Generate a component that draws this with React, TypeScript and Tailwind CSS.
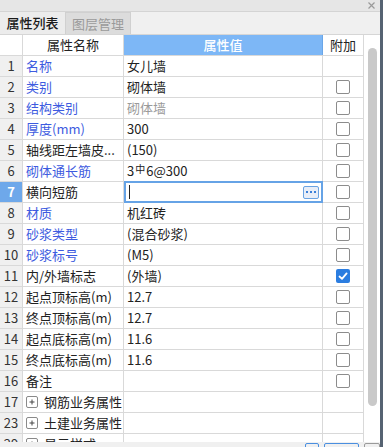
const font = { fontFamily: '"Noto Sans CJK SC", "Microsoft YaHei", sans-serif' };

type Row = {
  no: string;
  name: string;
  value?: React.ReactNode;
  blue?: boolean;
  grey?: boolean;
  check?: boolean | null;
  group?: boolean;
  editing?: boolean;
};

const rows: Row[] = [
  { no: '1', name: '名称', value: '女儿墙', blue: true, check: null },
  { no: '2', name: '类别', value: '砌体墙', blue: true, check: false },
  { no: '3', name: '结构类别', value: '砌体墙', blue: true, grey: true, check: false },
  { no: '4', name: '厚度(mm)', value: '300', blue: true, check: false },
  { no: '5', name: '轴线距左墙皮...', value: '(150)', check: false },
  {
    no: '6',
    name: '砌体通长筋',
    value: (
      <>
        3<span className="relative -top-[3px] mx-[1px] text-[10px]">中</span>6@300
      </>
    ),
    blue: true,
    check: false,
  },
  { no: '7', name: '横向短筋', editing: true, check: false },
  { no: '8', name: '材质', value: '机红砖', blue: true, check: false },
  { no: '9', name: '砂浆类型', value: '(混合砂浆)', blue: true, check: false },
  { no: '10', name: '砂浆标号', value: '(M5)', blue: true, check: false },
  { no: '11', name: '内/外墙标志', value: '(外墙)', check: true },
  { no: '12', name: '起点顶标高(m)', value: '12.7', check: false },
  { no: '13', name: '终点顶标高(m)', value: '12.7', check: false },
  { no: '14', name: '起点底标高(m)', value: '11.6', check: false },
  { no: '15', name: '终点底标高(m)', value: '11.6', check: false },
  { no: '16', name: '备注', value: '', check: false },
  { no: '17', name: '钢筋业务属性', group: true, check: null },
  { no: '23', name: '土建业务属性', group: true, check: null },
  { no: '29', name: '显示样式', group: true, check: null },
];

function Checkbox({ checked }: { checked: boolean }) {
  if (checked) {
    return (
      <div className="flex h-[14px] w-[14px] items-center justify-center rounded-[2px] bg-[#2b7de0]">
        <svg width="10" height="10" viewBox="0 0 10 10" fill="none" stroke="white" strokeWidth="1.8" strokeLinecap="round" strokeLinejoin="round">
          <path d="M1.5 5.5 L4 7.8 L8.6 2.4" />
        </svg>
      </div>
    );
  }
  return <div className="h-[14px] w-[14px] rounded-[2px] border border-[#8c8c8c] bg-white" />;
}

function PlusBox() {
  return (
    <div className="mr-[6px] flex h-[12px] w-[12px] items-center justify-center rounded-[2px] border border-[#8a8a8a] text-[10px] leading-none text-[#444]">
      <svg width="8" height="8" viewBox="0 0 8 8" stroke="#444" strokeWidth="1">
        <path d="M4 1.5 V6.5 M1.5 4 H6.5" />
      </svg>
    </div>
  );
}

export default function App() {
  return (
    <div className="flex h-[447px] w-[383px] overflow-hidden bg-[#f0f0f0] text-[13px] text-[#222]" style={font}>
      <div className="flex w-[380px] flex-col">
        {/* Title bar */}
        <div className="flex h-[12px] shrink-0 items-center justify-end border-b border-[#d4d4d4] bg-[#e6e6e6] pr-[5px]">
          <svg width="7" height="7" viewBox="0 0 7 7" stroke="#9a9a9a" strokeWidth="1.2">
            <path d="M0.5 0.5 L6.5 6.5 M6.5 0.5 L0.5 6.5" />
          </svg>
        </div>

        {/* Tabs */}
        <div className="flex h-[23px] shrink-0 items-stretch border-b border-[#d6d6d6] bg-[#f0f0f0]">
          <div className="flex w-[65px] items-center justify-center bg-[#ececec] font-medium text-[#1a1a1a]">属性列表</div>
          <div className="flex w-[66px] items-center justify-center border-x border-t border-[#d0d0d0] bg-[#dcdcdc] text-[#9a9a9a]">图层管理</div>
        </div>

        {/* Table + scrollbar */}
        <div className="flex h-[407px] shrink-0 bg-white">
          <div className="w-[364px] overflow-hidden">
            <div className="grid h-[21px] grid-cols-[23px_101px_199px_41px] border-b border-[#d9d9d9]">
              <div className="border-r border-[#d9d9d9]" />
              <div className="flex items-center justify-center border-r border-[#d9d9d9]">属性名称</div>
              <div className="flex items-center justify-center border-r border-[#6aa6e8] bg-[#7db7f6] font-medium text-white">属性值</div>
              <div className="flex items-center justify-center border-r border-[#d9d9d9]">附加</div>
            </div>
            {rows.map((r) => (
              <div key={r.no} className="grid h-[21px] grid-cols-[23px_101px_199px_41px] border-b border-[#d9d9d9]">
                <div
                  className={
                    r.editing
                      ? 'flex items-center justify-center border-r border-[#d9d9d9] bg-[#6ea8ea] font-bold text-white'
                      : 'flex items-center justify-center border-r border-[#d9d9d9] bg-[#f0f0f0] text-[#333]'
                  }
                >
                  {r.no}
                </div>
                <div
                  className={
                    'flex items-center overflow-hidden whitespace-nowrap border-r border-[#d9d9d9] pl-[3px] ' +
                    (r.blue ? 'text-[#3d5be0]' : 'text-[#222]')
                  }
                >
                  {r.group && <PlusBox />}
                  {r.name}
                </div>
                {r.editing ? (
                  <div className="-my-[1px] flex items-center justify-between border-2 border-[#66a3e6] pl-[3px] pr-[2px]">
                    <div className="h-[14px] w-[1px] bg-[#222]" />
                    <div className="flex h-[13px] w-[16px] items-center justify-center gap-[2px] rounded-[2px] border border-[#6aa3e2] bg-[#e8eef8]">
                      <span className="h-[2px] w-[2px] bg-[#3a7fd8]" />
                      <span className="h-[2px] w-[2px] bg-[#3a7fd8]" />
                      <span className="h-[2px] w-[2px] bg-[#3a7fd8]" />
                    </div>
                  </div>
                ) : (
                  <div
                    className={
                      'flex items-center whitespace-nowrap border-r border-[#d9d9d9] pl-[3px] ' +
                      (r.grey ? 'text-[#9a9a9a]' : 'text-[#222]')
                    }
                  >
                    {r.value}
                  </div>
                )}
                <div className="flex items-center justify-center border-r border-[#d9d9d9]">
                  {r.check !== null && r.check !== undefined && <Checkbox checked={r.check} />}
                </div>
              </div>
            ))}
          </div>
          {/* Scrollbar */}
          <div className="flex w-[16px] flex-col pt-[13px] pl-[4px]">
            <div className="h-[358px] w-[9px] rounded-[5px] bg-[#c9c9c9]" />
          </div>
        </div>

        {/* Bottom strip with button tops */}
        <div className="flex h-[5px] shrink-0 items-start gap-[5px] bg-[#f0f0f0] pl-[305px] pt-[1px]">
          <div className="h-[6px] w-[14px] rounded-t-[2px] border border-[#4a8fe0]" />
          <div className="h-[6px] w-[36px] rounded-t-[2px] border border-[#4a8fe0]" />
          <div className="h-[6px] w-[16px] rounded-t-[2px] border border-[#9a9a9a]" />
        </div>
      </div>
      <div className="w-[3px] bg-[#566372]" />
    </div>
  );
}
